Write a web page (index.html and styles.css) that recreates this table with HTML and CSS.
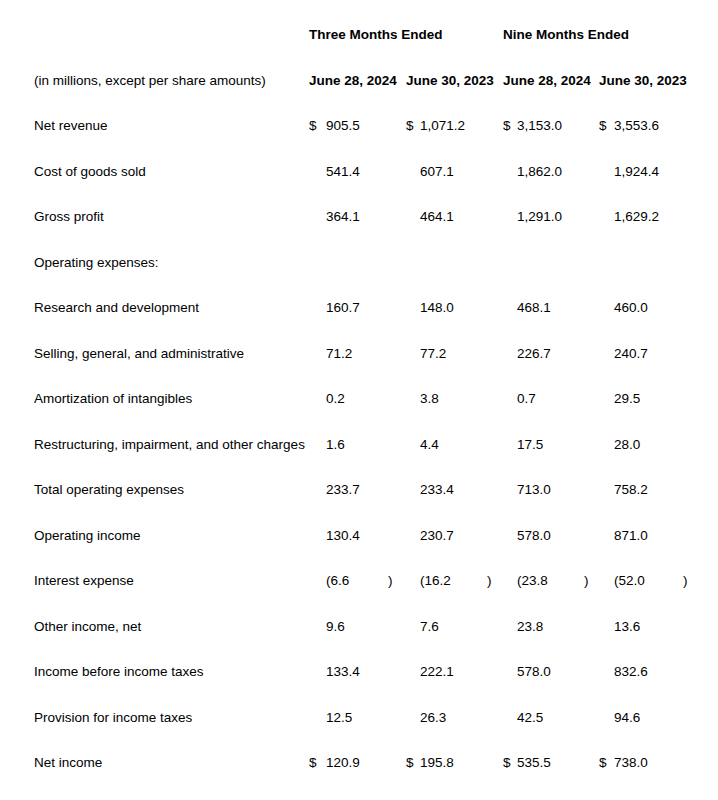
FILE: index.html
```html
<!DOCTYPE html>
<html>
<head>
<meta charset="utf-8">
<link rel="stylesheet" href="styles.css">
</head>
<body>
<div class="sheet">
  <div class="row head">
    <div class="label"></div>
    <div class="span3">Three Months Ended</div>
    <div class="span3"></div>
    <div class="span3">Nine Months Ended</div>
    <div class="span3"></div>
  </div>
  <div class="row head">
    <div class="label plain">(in millions, except per share amounts)</div>
    <div class="span3">June 28, 2024</div>
    <div class="span3">June 30, 2023</div>
    <div class="span3">June 28, 2024</div>
    <div class="span3">June 30, 2023</div>
  </div>
  <div class="row">
    <div class="label">Net revenue</div>
    <div>$</div><div>905.5</div><div></div>
    <div>$</div><div>1,071.2</div><div></div>
    <div>$</div><div>3,153.0</div><div></div>
    <div>$</div><div>3,553.6</div><div></div>
  </div>
  <div class="row">
    <div class="label">Cost of goods sold</div>
    <div></div><div>541.4</div><div></div>
    <div></div><div>607.1</div><div></div>
    <div></div><div>1,862.0</div><div></div>
    <div></div><div>1,924.4</div><div></div>
  </div>
  <div class="row">
    <div class="label">Gross profit</div>
    <div></div><div>364.1</div><div></div>
    <div></div><div>464.1</div><div></div>
    <div></div><div>1,291.0</div><div></div>
    <div></div><div>1,629.2</div><div></div>
  </div>
  <div class="row">
    <div class="label">Operating expenses:</div>
  </div>
  <div class="row">
    <div class="label">Research and development</div>
    <div></div><div>160.7</div><div></div>
    <div></div><div>148.0</div><div></div>
    <div></div><div>468.1</div><div></div>
    <div></div><div>460.0</div><div></div>
  </div>
  <div class="row">
    <div class="label">Selling, general, and administrative</div>
    <div></div><div>71.2</div><div></div>
    <div></div><div>77.2</div><div></div>
    <div></div><div>226.7</div><div></div>
    <div></div><div>240.7</div><div></div>
  </div>
  <div class="row">
    <div class="label">Amortization of intangibles</div>
    <div></div><div>0.2</div><div></div>
    <div></div><div>3.8</div><div></div>
    <div></div><div>0.7</div><div></div>
    <div></div><div>29.5</div><div></div>
  </div>
  <div class="row">
    <div class="label">Restructuring, impairment, and other charges</div>
    <div></div><div>1.6</div><div></div>
    <div></div><div>4.4</div><div></div>
    <div></div><div>17.5</div><div></div>
    <div></div><div>28.0</div><div></div>
  </div>
  <div class="row">
    <div class="label">Total operating expenses</div>
    <div></div><div>233.7</div><div></div>
    <div></div><div>233.4</div><div></div>
    <div></div><div>713.0</div><div></div>
    <div></div><div>758.2</div><div></div>
  </div>
  <div class="row">
    <div class="label">Operating income</div>
    <div></div><div>130.4</div><div></div>
    <div></div><div>230.7</div><div></div>
    <div></div><div>578.0</div><div></div>
    <div></div><div>871.0</div><div></div>
  </div>
  <div class="row">
    <div class="label">Interest expense</div>
    <div></div><div>(6.6</div><div>)</div>
    <div></div><div>(16.2</div><div>)</div>
    <div></div><div>(23.8</div><div>)</div>
    <div></div><div>(52.0</div><div>)</div>
  </div>
  <div class="row">
    <div class="label">Other income, net</div>
    <div></div><div>9.6</div><div></div>
    <div></div><div>7.6</div><div></div>
    <div></div><div>23.8</div><div></div>
    <div></div><div>13.6</div><div></div>
  </div>
  <div class="row">
    <div class="label">Income before income taxes</div>
    <div></div><div>133.4</div><div></div>
    <div></div><div>222.1</div><div></div>
    <div></div><div>578.0</div><div></div>
    <div></div><div>832.6</div><div></div>
  </div>
  <div class="row">
    <div class="label">Provision for income taxes</div>
    <div></div><div>12.5</div><div></div>
    <div></div><div>26.3</div><div></div>
    <div></div><div>42.5</div><div></div>
    <div></div><div>94.6</div><div></div>
  </div>
  <div class="row">
    <div class="label">Net income</div>
    <div>$</div><div>120.9</div><div></div>
    <div>$</div><div>195.8</div><div></div>
    <div>$</div><div>535.5</div><div></div>
    <div>$</div><div>738.0</div><div></div>
  </div>
</div>
</body>
</html>
```

FILE: styles.css
```css
html, body {
  margin: 0;
  padding: 0;
  background: #ffffff;
}

body {
  font-family: "Liberation Sans", Arial, sans-serif;
  font-size: 13.5px;
  color: #000000;
}

.sheet {
  padding: 12px 0 0 34px;
}

.row {
  display: grid;
  grid-template-columns: 275px 17px 62px 18px 14px 67px 16px 14px 67px 15px 15px 69px 18px;
  height: 45.5px;
  align-items: center;
  white-space: nowrap;
}

.head {
  font-weight: bold;
}

.head .plain {
  font-weight: normal;
}

.span3 {
  grid-column: span 3;
}
```
